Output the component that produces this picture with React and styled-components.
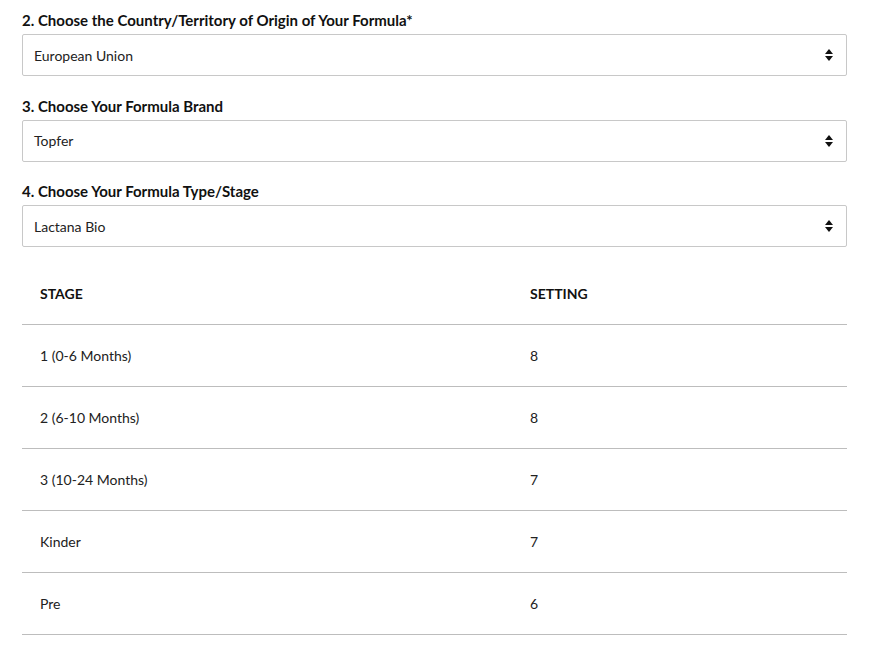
import styled, { createGlobalStyle } from 'styled-components';

const GlobalStyle = createGlobalStyle`
  html, body {
    margin: 0;
    padding: 0;
    background: #fff;
  }
  body {
    font-family: 'Lato', 'Open Sans', sans-serif;
    color: #111;
  }
`;

const Page = styled.div`
  padding: 10px 30px 0 22px;
  width: 825px;
`;

const Field = styled.div`
  margin-bottom: 19.5px;
`;

const Label = styled.div`
  font-size: 15px;
  font-weight: 700;
  line-height: 20px;
  margin-bottom: 4px;
  color: #111;
`;

const SelectBox = styled.div`
  height: 42px;
  box-sizing: border-box;
  border: 1px solid #c8c8c8;
  border-radius: 2px;
  display: flex;
  align-items: center;
  justify-content: space-between;
  padding: 0 12px 0 11px;
  font-size: 14px;
  color: #222;
`;

const Arrows = () => (
  <svg width="10" height="14" viewBox="0 0 10 14" aria-hidden="true">
    <path d="M5 1 L9 6 L1 6 Z" fill="#111" />
    <path d="M1 8 L9 8 L5 13 Z" fill="#111" />
  </svg>
);

const Table = styled.table`
  width: 100%;
  border-collapse: collapse;
  table-layout: fixed;
  margin-top: -4px;
  font-size: 14px;
`;

const Th = styled.th`
  box-sizing: border-box;
  text-align: left;
  font-weight: 700;
  font-size: 14px;
  height: 62px;
  padding: 0 18px;
  border-bottom: 1px solid #bdbdbd;
  width: ${(p) => p.$width || 'auto'};
`;

const Td = styled.td`
  height: 61px;
  padding: 0 18px;
  border-bottom: 1px solid #bdbdbd;
  color: #222;
`;

const fields = [
  { label: '2. Choose the Country/Territory of Origin of Your Formula*', value: 'European Union' },
  { label: '3. Choose Your Formula Brand', value: 'Topfer' },
  { label: '4. Choose Your Formula Type/Stage', value: 'Lactana Bio' },
];

const rows = [
  ['1 (0-6 Months)', '8'],
  ['2 (6-10 Months)', '8'],
  ['3 (10-24 Months)', '7'],
  ['Kinder', '7'],
  ['Pre', '6'],
];

export default function App() {
  return (
    <>
      <GlobalStyle />
      <Page>
        {fields.map((f) => (
          <Field key={f.label}>
            <Label>{f.label}</Label>
            <SelectBox>
              <span>{f.value}</span>
              <Arrows />
            </SelectBox>
          </Field>
        ))}
        <Table>
          <thead>
            <tr>
              <Th $width="490px">STAGE</Th>
              <Th>SETTING</Th>
            </tr>
          </thead>
          <tbody>
            {rows.map(([stage, setting]) => (
              <tr key={stage}>
                <Td>{stage}</Td>
                <Td>{setting}</Td>
              </tr>
            ))}
          </tbody>
        </Table>
      </Page>
    </>
  );
}
